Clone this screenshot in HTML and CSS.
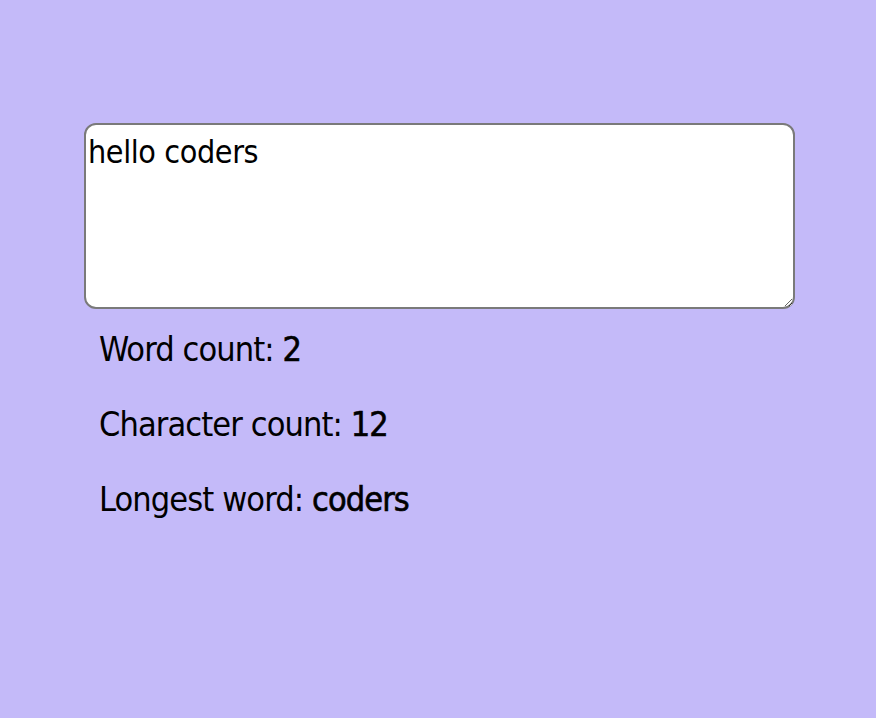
FILE: index.html
```html
<!DOCTYPE html>
<html>
<head>
<meta charset="utf-8">
<link rel="stylesheet" href="styles.css">
</head>
<body>
<main class="app">
  <textarea class="input">hello coders</textarea>
  <div class="stats">
    <p class="stat">Word count: <span class="value">2</span></p>
    <p class="stat">Character count: <span class="value">12</span></p>
    <p class="stat">Longest word: <span class="value">coders</span></p>
  </div>
</main>
</body>
</html>
```

FILE: styles.css
```css
html, body {
  margin: 0;
  padding: 0;
  background: #c4baf9;
  height: 100%;
}
body {
  font-family: "DejaVu Sans Condensed", "Liberation Sans", sans-serif;
  color: #000;
}
.app {
  padding: 123px 0 0 84px;
}
.input {
  display: block;
  box-sizing: border-box;
  width: 711px;
  height: 186px;
  margin: 0;
  padding: 7px 2px 4px;
  border: 2px solid #7a7a7a;
  border-radius: 12px;
  background: #fff;
  font-family: "DejaVu Sans Condensed", "Liberation Sans", sans-serif;
  font-size: 32px;
  letter-spacing: -0.4px;
  line-height: 40px;
  color: #000;
  resize: both;
}
.stats {
  padding: 18px 0 0 15px;
  display: flex;
  flex-direction: column;
  gap: 30px;
}
.stat {
  margin: 0;
  font-size: 34px;
  letter-spacing: -0.9px;
  line-height: 45px;
}
.value {
  font-weight: normal;
  -webkit-text-stroke: 0.6px #000;
}
```
